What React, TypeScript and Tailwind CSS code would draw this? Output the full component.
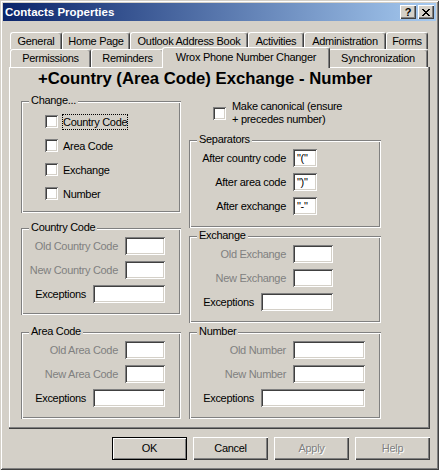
import React from "react";

const etched =
  "shadow-[inset_1px_1px_0_#808080,inset_-1px_-1px_0_#ffffff,inset_2px_2px_0_#ffffff,inset_-2px_-2px_0_#808080]";
const sunken =
  "shadow-[inset_1px_1px_0_#808080,inset_-1px_-1px_0_#ffffff,inset_2px_2px_0_#404040,inset_-2px_-2px_0_#d4d0c8]";
const raised =
  "shadow-[inset_1px_1px_0_#ffffff,inset_-1px_-1px_0_#404040,inset_-2px_-2px_0_#808080]";

function Group({
  label,
  className,
  children,
}: {
  label: string;
  className: string;
  children?: React.ReactNode;
}) {
  return (
    <div className={`relative ${etched} ${className}`}>
      <span className="absolute left-[8px] top-[-7px] bg-[#d4d0c8] px-[2px] leading-[13px]">
        {label}
      </span>
      {children}
    </div>
  );
}

function Field({ w, text }: { w: string; text?: string }) {
  return (
    <div className={`flex h-[18px] items-center bg-white pl-[4px] leading-[13px] ${sunken} ${w}`}>
      {text}
    </div>
  );
}

function Row({
  label,
  disabled,
  w,
  text,
}: {
  label: string;
  disabled?: boolean;
  w: string;
  text?: string;
}) {
  return (
    <div className="flex h-[18px] items-center justify-end gap-[7px]">
      <span className={disabled ? "text-[#808080]" : "text-black"}>{label}</span>
      <Field w={w} text={text} />
    </div>
  );
}

function Check() {
  return <div className={`h-[13px] w-[13px] shrink-0 bg-white ${sunken}`} />;
}

function Tab({ label, w }: { label: string; w: string }) {
  return (
    <div
      className={`flex h-full items-center justify-center whitespace-nowrap rounded-t-[3px] border-l border-r border-t border-l-white border-r-[#404040] border-t-white shadow-[inset_-1px_0_0_#808080] ${w}`}
    >
      {label}
    </div>
  );
}

function CloseGlyph() {
  const rows = [
    "11000011",
    "01100110",
    "00111100",
    "00011000",
    "00111100",
    "01100110",
    "11000011",
  ];
  return (
    <svg width="8" height="7" viewBox="0 0 8 7" shapeRendering="crispEdges">
      {rows.map((r, y) =>
        r.split("").map((c, x) =>
          c === "1" ? <rect key={`${x}-${y}`} x={x} y={y} width="1" height="1" fill="#000" /> : null
        )
      )}
    </svg>
  );
}

export default function App() {
  return (
    <div className="h-[470px] w-[439px] overflow-hidden bg-[#d4d0c8] font-['Liberation_Sans',Arial,sans-serif] text-[11px] tracking-[-0.3px] text-black shadow-[inset_1px_1px_0_#d4d0c8,inset_-1px_-1px_0_#404040,inset_2px_2px_0_#ffffff,inset_-2px_-2px_0_#808080] pt-[3px]">
      {/* Title bar */}
      <div className="mx-[3px] flex h-[18px] items-center bg-[linear-gradient(to_right,#0a246a,#a6caf0)] pl-[2px] pr-[2px]">
        <span className="text-[11.5px] font-bold leading-[14px] tracking-normal text-white">Contacts Properties</span>
        <div className="ml-auto flex gap-[2px]">
          <div className={`flex h-[14px] w-[16px] items-center justify-center bg-[#d4d0c8] ${raised}`}>
            <span className="text-[11px] font-bold leading-[11px]">?</span>
          </div>
          <div className={`flex h-[14px] w-[16px] items-center justify-center bg-[#d4d0c8] ${raised}`}>
            <CloseGlyph />
          </div>
        </div>
      </div>

      {/* Tabs */}
      <div className="ml-[10px] mt-[11px] flex h-[17px]">
        <Tab label="General" w="w-[52px]" />
        <Tab label="Home Page" w="w-[68px]" />
        <Tab label="Outlook Address Book" w="w-[118px]" />
        <Tab label="Activities" w="w-[56px]" />
        <Tab label="Administration" w="w-[82px]" />
        <Tab label="Forms" w="w-[42px]" />
      </div>
      <div className="ml-[10px] flex h-[18px]">
        <Tab label="Permissions" w="w-[81px]" />
        <Tab label="Reminders" w="w-[73px]" />
        <div className="relative z-10 -mx-[2px] -mt-[2px] flex h-[21px] w-[168px] items-center justify-center whitespace-nowrap rounded-t-[3px] border-l border-r border-t border-l-white border-r-[#404040] border-t-white bg-[#d4d0c8] pb-[2px] shadow-[inset_-1px_0_0_#808080]">
          Wrox Phone Number Changer
        </div>
        <Tab label="Synchronization" w="w-[100px]" />
      </div>

      {/* Panel */}
      <div className="ml-[9px] h-[362px] w-[421px] shadow-[inset_-1px_-1px_0_#404040,inset_-2px_-2px_0_#808080,inset_1px_1px_0_#ffffff]">
        <div className="h-[33px] pl-[29px] pt-[2px] text-[16.7px] font-bold leading-[20px] tracking-normal whitespace-nowrap">
          +Country (Area Code) Exchange - Number
        </div>
        <div className="flex gap-[8px] pl-[12px]">
          {/* Left column */}
          <div className="flex w-[160px] flex-col pt-[1px]">
            <Group label="Change..." className="h-[112px] w-[160px]">
              <div className="flex flex-col gap-[11px] pl-[24px] pt-[14px]">
                <div className="flex h-[13px] items-center gap-[4px]">
                  <Check />
                  <span className="border border-dotted border-black leading-[14px]">Country Code</span>
                </div>
                <div className="flex h-[13px] items-center gap-[4px]">
                  <Check />
                  <span className="border border-transparent leading-[14px]">Area Code</span>
                </div>
                <div className="flex h-[13px] items-center gap-[4px]">
                  <Check />
                  <span className="border border-transparent leading-[14px]">Exchange</span>
                </div>
                <div className="flex h-[13px] items-center gap-[4px]">
                  <Check />
                  <span className="border border-transparent leading-[14px]">Number</span>
                </div>
              </div>
            </Group>

            <Group label="Country Code" className="mt-[15px] h-[87px] w-[160px]">
              <div className="flex flex-col gap-[6px] pr-[16px] pt-[9px]">
                <Row label="Old Country Code" disabled w="w-[40px]" />
                <Row label="New Country Code" disabled w="w-[40px]" />
                <Row label="Exceptions" w="w-[72px]" />
              </div>
            </Group>

            <Group label="Area Code" className="mt-[17px] h-[87px] w-[160px]">
              <div className="flex flex-col gap-[6px] pr-[16px] pt-[9px]">
                <Row label="Old Area Code" disabled w="w-[40px]" />
                <Row label="New Area Code" disabled w="w-[40px]" />
                <Row label="Exceptions" w="w-[72px]" />
              </div>
            </Group>
          </div>

          {/* Right column */}
          <div className="flex w-[192px] flex-col">
            <div className="flex h-[26px] items-center gap-[6px] pl-[24px]">
              <Check />
              <div className="leading-[13px]">
                Make canonical (ensure
                <br />+ precedes number)
              </div>
            </div>

            <Group label="Separators" className="mt-[14px] h-[88px] w-[192px]">
              <div className="flex flex-col gap-[6px] pr-[64px] pt-[9px]">
                <Row label="After country code" w="w-[24px]" text={'"("'} />
                <Row label="After area code" w="w-[24px]" text={'")"'} />
                <Row label="After exchange" w="w-[24px]" text={'"-"'} />
              </div>
            </Group>

            <Group label="Exchange" className="mt-[8px] h-[87px] w-[192px]">
              <div className="flex flex-col gap-[6px] pr-[48px] pt-[9px]">
                <Row label="Old Exchange" disabled w="w-[40px]" />
                <Row label="New Exchange" disabled w="w-[40px]" />
                <Row label="Exceptions" w="w-[72px]" />
              </div>
            </Group>

            <Group label="Number" className="mt-[9px] h-[87px] w-[192px]">
              <div className="flex flex-col gap-[6px] pr-[16px] pt-[9px]">
                <Row label="Old Number" disabled w="w-[72px]" />
                <Row label="New Number" disabled w="w-[72px]" />
                <Row label="Exceptions" w="w-[104px]" />
              </div>
            </Group>
          </div>
        </div>
      </div>

      {/* Buttons */}
      <div className="ml-[112px] mt-[8px] flex gap-[6px]">
        <div className="flex h-[23px] w-[75px] items-center justify-center border border-black shadow-[inset_1px_1px_0_#ffffff,inset_-1px_-1px_0_#808080]">
          OK
        </div>
        <div className={`flex h-[23px] w-[75px] items-center justify-center ${raised}`}>Cancel</div>
        <div className={`flex h-[23px] w-[75px] items-center justify-center text-[#808080] [text-shadow:1px_1px_0_#ffffff] ${raised}`}>
          Apply
        </div>
        <div className={`flex h-[23px] w-[75px] items-center justify-center text-[#808080] [text-shadow:1px_1px_0_#ffffff] ${raised}`}>
          Help
        </div>
      </div>
    </div>
  );
}
